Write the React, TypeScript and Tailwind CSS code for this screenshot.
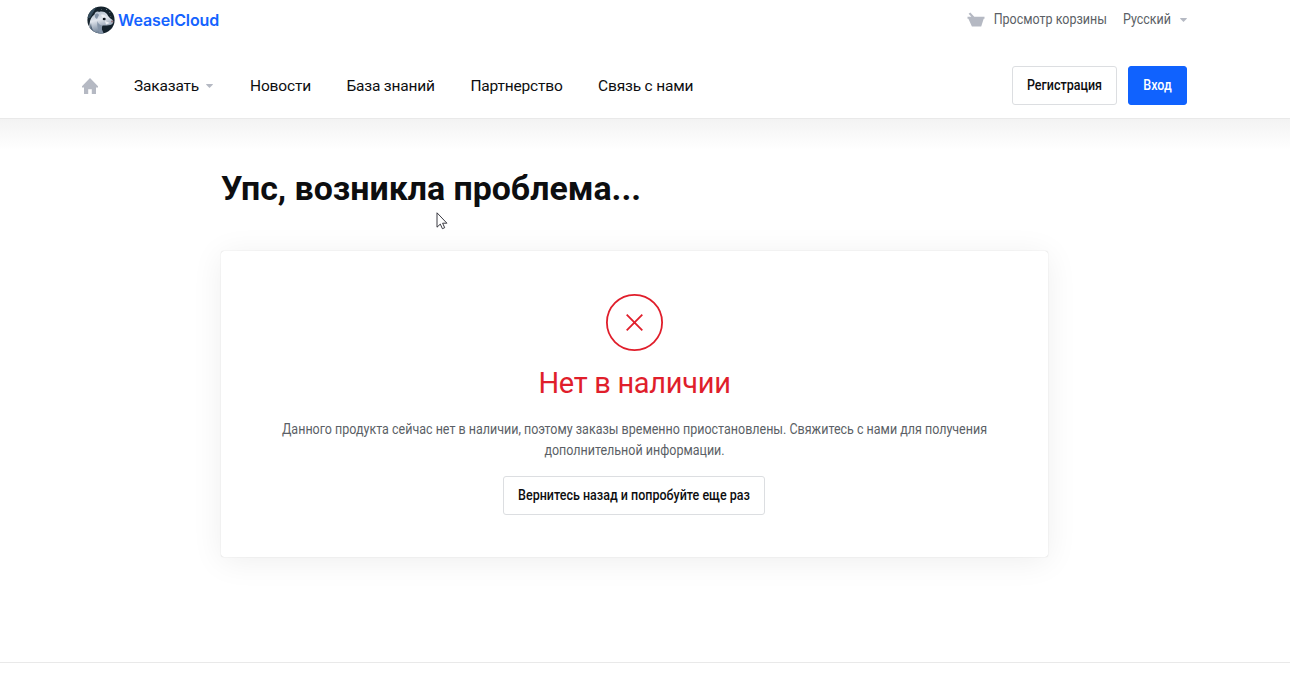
import type { ReactNode } from 'react';

const navItems = ['Новости', 'База знаний', 'Партнерство', 'Связь с нами'];

export default function App() {
  return (
    <div className="relative h-[677px] overflow-hidden bg-white font-[Roboto,sans-serif] text-[#0d0e10]">
      <header className="h-[119px] border-b border-[#e9e9e9]">
        <div className="ml-20 w-[1107px]">
          <TopBar />
          <NavBar />
        </div>
      </header>
      <div className="h-[31px] bg-linear-to-b from-[#f3f3f3] to-white" />

      <main className="ml-[221px] w-[827px]">
        <h1 className="mt-[17px] text-[33.9px] leading-[43px] font-bold whitespace-nowrap">Упс, возникла проблема...</h1>
        <section className="mt-[41px] flex h-[306px] flex-col items-center rounded-[3px] bg-white pt-[43px] shadow-[0_0_1px_rgba(0,0,0,0.25),0_4px_32px_rgba(0,0,0,0.07)]">
          <ErrorIcon />
          <h2 className="mt-[14px] text-[29px] leading-[36px] tracking-[-0.3px] text-[#e01e2b]">Нет в наличии</h2>
          <p className="mt-5 scale-y-110 text-center text-[12.5px] leading-[19.4px] whitespace-nowrap text-[#5b5f66]">
            Данного продукта сейчас нет в наличии, поэтому заказы временно приостановлены. Свяжитесь с нами для получения
            <br />
            дополнительной информации.
          </p>
          <Button className="mt-4 mr-px w-[262px]">Вернитесь назад и попробуйте еще раз</Button>
        </section>
      </main>

      <footer className="mt-[105px] border-t border-[#e9e9e9]" />
      <Cursor />
    </div>
  );
}

function TopBar() {
  return (
    <div className="flex h-10 items-center justify-between">
      <a className="ml-[7px] flex items-center">
        <Logo />
        <span className="ml-[3px] font-[Inter,sans-serif] text-[16px] leading-5 font-semibold tracking-[-0.1px] text-[#1463ff]">WeaselCloud</span>
      </a>
      <div className="flex items-center text-[12.5px] leading-5 text-[#5b5f66]">
        <svg className="mr-[9px] h-4 w-[18px]" viewBox="0 0 18 16" fill="#b5b9c3">
          <path d="M1.600 1.800 3.300.6l4 4.200H17.500v2h-.8L14.200 14.500H4.900L1.400 6.800H.5v-2h3.900z" />
        </svg>
        <span className="scale-y-110">Просмотр корзины</span>
        <span className="ml-4 scale-y-110">Русский</span>
        <Caret className="ml-[9px]" />
      </div>
    </div>
  );
}

function NavBar() {
  return (
    <nav className="flex h-[91px] items-center text-[15.5px] leading-5 tracking-[-0.18px]">
      <svg className="ml-[2px] h-4 w-4" viewBox="0 0 16 16" fill="#b5b9c3">
        <path d="M8 0 0 8.200V9.500h2V16h4.200v-4.800h3.600V16H14V9.500h2V8.200z" />
      </svg>
      <span className="ml-9">Заказать</span>
      <Caret className="ml-[7px]" />
      <div className="ml-[37px] flex gap-[35.5px]">
        {navItems.map(item => (
          <span key={item}>{item}</span>
        ))}
      </div>
      <div className="ml-auto flex gap-[11px] tracking-normal">
        <Button className="w-[105px]">Регистрация</Button>
        <Button primary className="w-[59px]">Вход</Button>
      </div>
    </nav>
  );
}

function Button({ children, className, primary }: { children: ReactNode; className?: string; primary?: boolean }) {
  return (
    <button
      className={cn(
        'flex h-[39px] shrink-0 items-center justify-center rounded-[3px] border pt-px text-[12.5px] leading-5 font-medium whitespace-nowrap',
        primary ? 'border-[#1062fe] bg-[#1062fe] text-white' : 'border-[#dcdee1] bg-white text-[#0d0e10]',
        className
      )}
    >
      <span className="scale-y-110">{children}</span>
    </button>
  );
}

function Caret({ className }: { className?: string }) {
  return (
    <svg className={cn('h-1 w-[7px]', className)} viewBox="0 0 7 4" fill="#b5b9c3">
      <path d="M.5 0h6L7 .6 3.5 4 0 .6z" />
    </svg>
  );
}

function ErrorIcon() {
  return (
    <svg className="h-[57px] w-[57px] shrink-0" viewBox="0 0 57 57" fill="none" stroke="#e01e2b">
      <circle cx="28.5" cy="28.5" r="27.6" strokeWidth="1.8" />
      <path d="m20.700 20.700 15.600 15.600m0-15.600L20.700 36.300" strokeWidth="1.8" />
    </svg>
  );
}

// round avatar with the weasel looking right
function Logo() {
  return (
    <svg className="h-7 w-7" viewBox="0 0 28 28">
      <defs>
        <clipPath id="avatar">
          <circle cx="14" cy="14" r="13.6" />
        </clipPath>
        <linearGradient id="fur" x1="0" y1="0" x2="0.3" y2="1">
          <stop offset="0" stopColor="#a9b7c6" />
          <stop offset="0.45" stopColor="#e0e5ed" />
          <stop offset="1" stopColor="#697c93" />
        </linearGradient>
      </defs>
      <g clipPath="url(#avatar)">
        <path fill="#14222c" d="M0 0h28v28H0z" />
        <path fill="#354b5b" d="M0 0h10L3 12H0z" />
        <path fill="url(#fur)" d="M1 28 2.500 18C3 13 5 10 7.500 8.500 8 6 10 5 12 6c3-1 6-.3 8 2 1 2 2.300 4 5.600 6 1 1.500.7 3.200-.6 4.300-3 1.500-7 1.400-9.500 1.200C14 22 15 25 17 28z" />
        <path fill="#8494a8" d="M8 9c1-2 3-2 4 0L10 13c-2-1-2.500-2.500-2-4zM15 19.500c-3-1-4-2.500-4.500-4.500-.5 3-.5 7 2.500 13h4c-2-3-3-6-2-8.500z" />
        <path fill="#4f6175" d="M4 17c0 4 2 8 5 11H5c-2-3-2.500-7-1-11z" />
        <path fill="#edf0f5" d="M14 9c2-1 4 0 5 2l-3 1zM18 15l5 2-4 1.500z" />
        <ellipse cx="17.200" cy="13" rx="1.500" ry="1.300" fill="#101820" />
        <ellipse cx="25.200" cy="15.500" rx="1.200" ry="1" fill="#8d6f78" />
        <path fill="#b6c6d0" d="M19 3h.8v.8H19zM22.500 6h.7v.7h-.7zM14 3.500h.6v.6H14zM23.500 10h.6v.6h-.6z" />
      </g>
    </svg>
  );
}

function Cursor() {
  return (
    <svg className="absolute top-[212px] left-[436px] h-[18px] w-3" viewBox="0 0 12 18" fill="#fff" stroke="#25252e">
      <path d="M1 .8v14.400l3.300-3.100 2.100 4.600 2.300-1-2.100-4.500h4.300z" strokeWidth="0.9" />
    </svg>
  );
}

function cn(...inputs: any[]) {
  return inputs.filter(Boolean).join(' ');
}
